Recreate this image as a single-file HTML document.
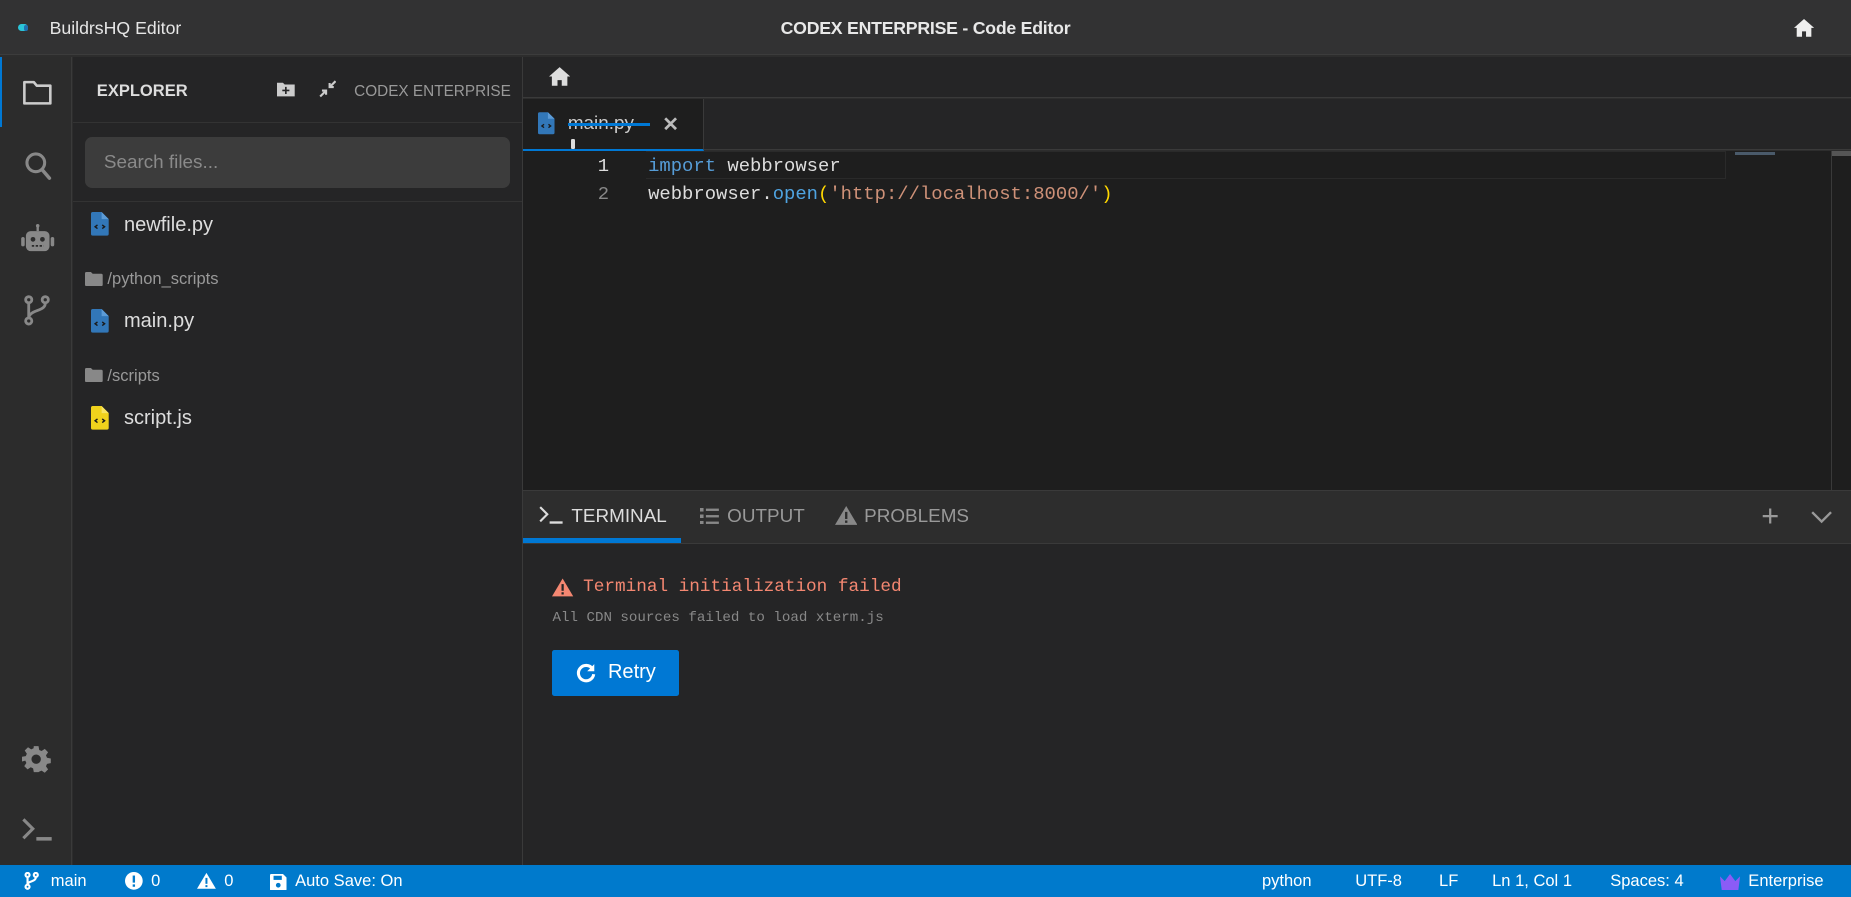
<!DOCTYPE html>
<html><head><meta charset="utf-8"><style>
html{zoom:1.18049}
*{box-sizing:border-box;margin:0;padding:0}
body{width:1568px;height:760px;background:#2d2d2d;font-family:"Liberation Sans",sans-serif;overflow:hidden;position:relative;color:#ccc}
.a{position:absolute}
.mono{font-family:"Liberation Mono","DejaVu Sans Mono",monospace}
svg{display:block}
.sb span{position:absolute;top:0;line-height:27px;white-space:nowrap}
</style></head><body>
<!-- title bar -->
<div class="a" style="left:0;top:0;width:1568px;height:47px;background:#323233;border-bottom:1px solid #3c3c3c"></div>
<div class="a" style="left:15px;top:20px;width:9px;height:6px;background:#2bc5d9;border-radius:3px"></div>
<div class="a" style="left:20px;top:21px;width:4px;height:5px;background:#1f6fb0;border-radius:2px"></div>
<div class="a" style="left:42px;top:15px;font-size:15px;color:#e6e6e6">BuildrsHQ Editor</div>
<div class="a" style="left:0;width:1568px;top:15px;text-align:center;font-size:15px;color:#e8e8e8;font-weight:bold;letter-spacing:-.2px">CODEX ENTERPRISE - Code Editor</div>
<svg class="a" style="left:1520px;top:16px" width="17" height="15" viewBox="0 0 17 15"><path d="M8.5 0L0 7.5h2.3V15h4.5v-4.5h3.4V15h4.5V7.5H17z" fill="#eee"/></svg>
<!-- activity bar -->
<div class="a" style="left:0;top:48px;width:61px;height:685px;background:#2c2c2c;border-right:1px solid #3a3a3a"></div>
<div class="a" style="left:0;top:48px;width:2px;height:60px;background:#0078d4"></div>
<svg class="a" style="left:19px;top:66px" width="26" height="24" viewBox="0 0 26 24"><path d="M2 3.5h8l2.5 3H24v15H2z" fill="none" stroke="#ccc" stroke-width="2.2" stroke-linejoin="round"/></svg>
<svg class="a" style="left:20px;top:128px" width="24" height="26" viewBox="0 0 24 26"><circle cx="10" cy="10" r="7.5" fill="none" stroke="#888" stroke-width="2.6"/><path d="M15.5 16l6 7" stroke="#888" stroke-width="3" stroke-linecap="round"/></svg>
<svg class="a" style="left:17px;top:190px" width="30" height="24" viewBox="0 0 30 24"><rect x="5" y="6" width="20" height="17" rx="4" fill="#888"/><rect x="1" y="11" width="3" height="8" rx="1.5" fill="#888"/><rect x="26" y="11" width="3" height="8" rx="1.5" fill="#888"/><rect x="14" y="1" width="2" height="5" fill="#888"/><circle cx="15" cy="1.5" r="1.5" fill="#888"/><circle cx="11" cy="13" r="2" fill="#2c2c2c"/><circle cx="19" cy="13" r="2" fill="#2c2c2c"/><path d="M10 18.5h10" stroke="#2c2c2c" stroke-width="1.5" stroke-dasharray="2 1.3"/></svg>
<svg class="a" style="left:20px;top:250px" width="24" height="26" viewBox="0 0 24 26"><g fill="none" stroke="#888" stroke-width="2.4"><circle cx="4" cy="4" r="2.6"/><circle cx="18" cy="4" r="2.6"/><circle cx="4" cy="22" r="2.6"/><path d="M4 7v12M18 7c0 7-12 5-14 12"/></g></svg>
<svg class="a" style="left:19px;top:631px" width="24" height="24" viewBox="0 0 24 24"><path fill="#888" fill-rule="evenodd" d="M10 1h4l.6 3.2 2 .9 2.7-1.8 2.8 2.8-1.8 2.7.9 2 3.2.6v4l-3.2.6-.9 2 1.8 2.7-2.8 2.8-2.7-1.8-2 .9L14 23h-4l-.6-3.2-2-.9-2.7 1.8-2.8-2.8 1.8-2.7-.9-2L0 14v-4l3.2-.6.9-2L2.3 4.7l2.8-2.8 2.7 1.8 2-.9zM12 8a4 4 0 100 8 4 4 0 000-8z"/></svg>
<svg class="a" style="left:18px;top:692px" width="28" height="22" viewBox="0 0 28 22"><path d="M2 2l8 8-8 8" fill="none" stroke="#888" stroke-width="2.6"/><rect x="13" y="17" width="13" height="3" fill="#888"/></svg>
<!-- sidebar -->
<div class="a" style="left:62px;top:48px;width:381px;height:685px;background:#252526;border-right:1px solid #3a3a3a"></div>
<div class="a" style="left:62px;top:103px;width:380px;height:1px;background:#333"></div>
<div class="a" style="left:82px;top:69px;font-size:14px;font-weight:bold;color:#ddd">EXPLORER</div>
<svg class="a" style="left:235px;top:69px" width="15" height="13" viewBox="0 0 15 13"><path d="M0 1.5h5l1.5 1.5H15V13H0z" fill="#ccc"/><path d="M7.5 5v6M4.5 8h6" stroke="#252526" stroke-width="1.4"/></svg>
<svg class="a" style="left:270px;top:68px" width="15" height="15" viewBox="0 0 15 15"><path d="M14 1L9 6M9 2.5V6h3.5M1 14l5-5M6 12.5V9H2.5" stroke="#ccc" stroke-width="1.8" fill="none"/></svg>
<div class="a" style="left:300px;top:70px;font-size:13px;color:#999">CODEX ENTERPRISE</div>
<div class="a" style="left:72px;top:116px;width:360px;height:43px;background:#3c3c3c;border-radius:6px"></div>
<div class="a" style="left:88px;top:129px;font-size:16px;color:#8a8a8a">Search files...</div>
<div class="a" style="left:62px;top:170px;width:380px;height:1px;background:#333"></div>
<svg class="a" style="left:77px;top:180px" width="15" height="20" viewBox="0 0 15 20"><path d="M0 1.5A1.5 1.5 0 011.5 0H9l6 6v12.5A1.5 1.5 0 0113.5 20h-12A1.5 1.5 0 010 18.5z" fill="#3277b8"/><path d="M9 0v6h6z" fill="#5c9bd6"/><path d="M5.5 11l-2 1.5 2 1.5M9.5 11l2 1.5-2 1.5" stroke="#1a1a1a" stroke-width="1.2" fill="none"/></svg>
<div class="a" style="left:105px;top:181px;font-size:17px;color:#ddd">newfile.py</div>
<svg class="a" style="left:72px;top:230px" width="15" height="12" viewBox="0 0 15 12"><path d="M0 1.2A1.2 1.2 0 011.2 0H5l1.5 1.5h7.3A1.2 1.2 0 0115 2.7v8.1a1.2 1.2 0 01-1.2 1.2H1.2A1.2 1.2 0 010 10.8z" fill="#888"/></svg>
<div class="a" style="left:91px;top:228px;font-size:14px;color:#999">/python_scripts</div>
<svg class="a" style="left:77px;top:262px" width="15" height="20" viewBox="0 0 15 20"><path d="M0 1.5A1.5 1.5 0 011.5 0H9l6 6v12.5A1.5 1.5 0 0113.5 20h-12A1.5 1.5 0 010 18.5z" fill="#3277b8"/><path d="M9 0v6h6z" fill="#5c9bd6"/><path d="M5.5 11l-2 1.5 2 1.5M9.5 11l2 1.5-2 1.5" stroke="#1a1a1a" stroke-width="1.2" fill="none"/></svg>
<div class="a" style="left:105px;top:263px;font-size:17px;color:#ddd">main.py</div>
<svg class="a" style="left:72px;top:312px" width="15" height="12" viewBox="0 0 15 12"><path d="M0 1.2A1.2 1.2 0 011.2 0H5l1.5 1.5h7.3A1.2 1.2 0 0115 2.7v8.1a1.2 1.2 0 01-1.2 1.2H1.2A1.2 1.2 0 010 10.8z" fill="#888"/></svg>
<div class="a" style="left:91px;top:310px;font-size:14px;color:#999">/scripts</div>
<svg class="a" style="left:77px;top:344px" width="15" height="20" viewBox="0 0 15 20"><path d="M0 1.5A1.5 1.5 0 011.5 0H9l6 6v12.5A1.5 1.5 0 0113.5 20h-12A1.5 1.5 0 010 18.5z" fill="#f0d21c"/><path d="M9 0v6h6z" fill="#f7e463"/><path d="M5.5 11l-2 1.5 2 1.5M9.5 11l2 1.5-2 1.5" stroke="#1a1a1a" stroke-width="1.2" fill="none"/></svg>
<div class="a" style="left:105px;top:345px;font-size:17px;color:#ddd">script.js</div>
<!-- editor -->
<div class="a" style="left:443px;top:48px;width:1125px;height:35px;background:#252526;border-bottom:1px solid #3a3a3a"></div>
<svg class="a" style="left:465px;top:57px" width="18" height="16" viewBox="0 0 17 15"><path d="M8.5 0L0 7.5h2.3V15h4.5v-4.5h3.4V15h4.5V7.5H17z" fill="#ddd"/></svg>
<div class="a" style="left:443px;top:84px;width:1125px;height:43px;background:#252526;border-bottom:1px solid #3a3a3a"></div>
<div class="a" style="left:443px;top:84px;width:153px;height:44px;background:#1e1e1e;border-right:1px solid #3a3a3a;border-bottom:2px solid #0078d4"></div>
<svg class="a" style="left:456px;top:95px" width="14" height="19" viewBox="0 0 15 20"><path d="M0 1.5A1.5 1.5 0 011.5 0H9l6 6v12.5A1.5 1.5 0 0113.5 20h-12A1.5 1.5 0 010 18.5z" fill="#3277b8"/><path d="M9 0v6h6z" fill="#5c9bd6"/><path d="M5.5 11l-2 1.5 2 1.5M9.5 11l2 1.5-2 1.5" stroke="#1a1a1a" stroke-width="1.2" fill="none"/></svg>
<div class="a" style="left:481px;top:96px;font-size:16px;color:#ccc">main.py</div>
<div class="a" style="left:481px;top:104px;width:70px;height:3px;background:#0078d4"></div>
<div class="a" style="left:484px;top:118px;width:3px;height:8px;background:#ddd;border-radius:1px"></div>
<div class="a" style="left:561px;top:95px;font-size:17px;color:#bbb;font-weight:bold">✕</div>
<div class="a" style="left:443px;top:128px;width:1125px;height:287px;background:#1e1e1e"></div>
<div class="a" style="left:547px;top:128px;width:915px;height:24px;border:1px solid #2a2a2a;border-left:none"></div>
<div class="a" style="left:1551px;top:128px;width:17px;height:287px;border-left:1px solid #3a3a3a"></div>
<div class="a" style="left:1552px;top:128px;width:16px;height:4px;background:#555"></div>
<div class="a" style="left:1470px;top:129px;width:34px;height:2px;background:#4a5a6a"></div>
<div class="a mono" style="left:500px;top:131px;width:16px;text-align:right;font-size:16px;color:#ddd;line-height:20px">1</div>
<div class="a mono" style="left:500px;top:155px;width:16px;text-align:right;font-size:16px;color:#888;line-height:20px">2</div>
<div class="a mono" style="left:549px;top:131px;font-size:16px;color:#ddd;line-height:20px;white-space:pre"><span style="color:#569cd6">import</span> webbrowser</div>
<div class="a mono" style="left:549px;top:155px;font-size:16px;color:#ddd;line-height:20px;white-space:pre">webbrowser.<span style="color:#4fa3e0">open</span><span style="color:#ffd700">(</span><span style="color:#ce9178">'http://localhost:8000/'</span><span style="color:#ffd700">)</span></div>
<!-- panel -->
<div class="a" style="left:443px;top:415px;width:1125px;height:46px;background:#2d2d2d;border-top:1px solid #3a3a3a;border-bottom:1px solid #3a3a3a"></div>
<div class="a" style="left:443px;top:456px;width:134px;height:4px;background:#0078d4"></div>
<svg class="a" style="left:457px;top:429px" width="21" height="16" viewBox="0 0 21 16"><path d="M1 1l6 6-6 6" fill="none" stroke="#ddd" stroke-width="1.8"/><rect x="9" y="13" width="11" height="2" fill="#ddd"/></svg>
<div class="a" style="left:484px;top:429px;font-size:16px;color:#ddd">TERMINAL</div>
<svg class="a" style="left:593px;top:430px" width="16" height="14" viewBox="0 0 16 14"><g fill="#888"><rect x="0" y="0" width="3" height="3"/><rect x="0" y="5.5" width="3" height="3"/><rect x="0" y="11" width="3" height="3"/><rect x="5" y="0.5" width="11" height="2"/><rect x="5" y="6" width="11" height="2"/><rect x="5" y="11.5" width="11" height="2"/></g></svg>
<div class="a" style="left:616px;top:429px;font-size:16px;color:#999">OUTPUT</div>
<svg class="a" style="left:707px;top:429px" width="19" height="16" viewBox="0 0 19 16"><path d="M9.5 0L19 16H0z" fill="#888"/><rect x="8.5" y="5" width="2" height="6" fill="#2d2d2d"/><rect x="8.5" y="12.3" width="2" height="2" fill="#2d2d2d"/></svg>
<div class="a" style="left:732px;top:429px;font-size:16px;color:#999">PROBLEMS</div>
<div class="a" style="left:1492px;top:422px;font-size:26px;color:#999;font-weight:300">+</div>
<svg class="a" style="left:1534px;top:433px" width="18" height="11" viewBox="0 0 18 11"><path d="M1 1l8 8 8-8" fill="none" stroke="#999" stroke-width="2"/></svg>
<div class="a" style="left:443px;top:461px;width:1125px;height:272px;background:#252526"></div>
<svg class="a" style="left:468px;top:490px" width="18" height="16" viewBox="0 0 19 16"><path d="M9.5 0L19 16H0z" fill="#f48771"/><rect x="8.5" y="5" width="2" height="6" fill="#252526"/><rect x="8.5" y="12.3" width="2" height="2" fill="#252526"/></svg>
<div class="a mono" style="left:494px;top:489px;font-size:15px;color:#f48771">Terminal initialization failed</div>
<div class="a mono" style="left:468px;top:517px;font-size:12px;color:#888">All CDN sources failed to load xterm.js</div>
<div class="a" style="left:468px;top:551px;width:107px;height:39px;background:#0078d4;border-radius:2px"></div>
<svg class="a" style="left:488px;top:562px" width="17" height="17" viewBox="0 0 17 17"><path d="M14 5A6.5 6.5 0 1015 9.5" fill="none" stroke="#fff" stroke-width="2.6"/><path d="M15.5 1v6h-6z" fill="#fff"/></svg>
<div class="a" style="left:515px;top:560px;font-size:17px;color:#fff">Retry</div>
<!-- status bar -->
<div class="a" style="left:0;top:733px;width:1568px;height:27px;background:#007acc"></div>
<div class="a sb" style="left:0;top:733px;width:1568px;height:27px;font-size:14px;color:#fff">
<svg class="a" style="left:20px;top:6px" width="13" height="15" viewBox="0 0 13 15"><g fill="none" stroke="#fff" stroke-width="1.8"><circle cx="3" cy="2.5" r="1.7"/><circle cx="10" cy="2.5" r="1.7"/><circle cx="3" cy="12.5" r="1.7"/><path d="M3 4.5v6M10 4.5c0 4-7 3-7 6"/></g></svg>
<span style="left:43px">main</span>
<svg class="a" style="left:106px;top:6px" width="15" height="15"><circle cx="7.5" cy="7.5" r="7.5" fill="#fff"/><rect x="6.5" y="3" width="2" height="6" fill="#007acc"/><rect x="6.5" y="10.5" width="2" height="2" fill="#007acc"/></svg>
<span style="left:128px">0</span>
<svg class="a" style="left:167px;top:6px" width="16" height="15" viewBox="0 0 19 16"><path d="M9.5 0L19 16H0z" fill="#fff"/><rect x="8.5" y="5" width="2" height="6" fill="#007acc"/><rect x="8.5" y="12.3" width="2" height="2" fill="#007acc"/></svg>
<span style="left:190px">0</span>
<svg class="a" style="left:229px;top:7px" width="14" height="14" viewBox="0 0 14 14"><path d="M0 1a1 1 0 011-1h10l3 3v10a1 1 0 01-1 1H1a1 1 0 01-1-1z" fill="#fff"/><rect x="3" y="1.5" width="7" height="3.5" fill="#007acc"/><circle cx="7" cy="9.5" r="2" fill="#007acc"/></svg>
<span style="left:250px">Auto Save: On</span>
<span style="left:1069px">python</span>
<span style="left:1148px">UTF-8</span>
<span style="left:1219px">LF</span>
<span style="left:1264px">Ln 1, Col 1</span>
<span style="left:1364px">Spaces: 4</span>
<svg class="a" style="left:1457px;top:7px" width="17" height="14" viewBox="0 0 17 14"><path d="M0 2l4 4 4.5-6 4.5 6 4-4-1.5 12h-14z" fill="#8b5cf6"/></svg>
<span style="left:1481px">Enterprise</span>
</div>
</body></html>
